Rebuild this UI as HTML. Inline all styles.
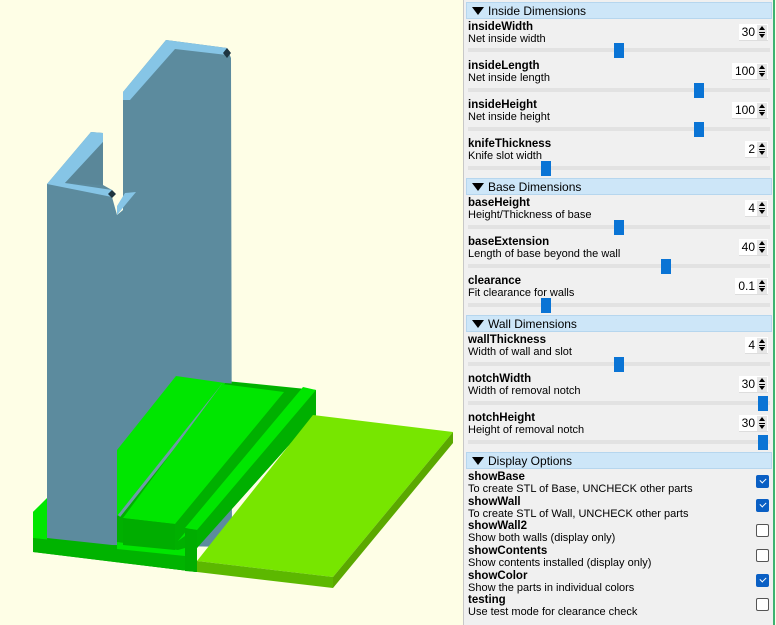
<!DOCTYPE html>
<html><head><meta charset="utf-8"><style>
*{margin:0;padding:0;box-sizing:border-box}
body{width:776px;height:625px;background:#fefee6;position:relative;overflow:hidden;font-family:"Liberation Sans",Arial,sans-serif;font-size:11px;color:#000}
#panel{position:absolute;left:463px;top:0;width:310px;height:625px;background:#f0f0f0;border-left:1px solid #c8c8c8}
#gl{position:absolute;left:773px;top:0;width:2px;height:625px;background:#3cb371}
.h{position:absolute;left:2px;width:306px;height:17px;background:#cde6f8;border:1px solid #b6d6ee;font-size:12px;line-height:16px;padding-left:21px}
.h:before{content:"";position:absolute;left:5px;top:4px;border-left:6px solid transparent;border-right:6px solid transparent;border-top:8px solid #000}
.l{position:absolute;left:4px;font-weight:bold;font-size:11.5px;margin-top:2px}
.d{position:absolute;left:4px;font-size:11px;margin-top:1px}
.tr{position:absolute;left:4px;width:302px;height:4px;background:#e2e2e2}
.th{position:absolute;width:10px;height:15px;background:#0a74d5}
.sp{position:absolute;right:5px;height:17px;background:#fff;border-bottom:1px solid #ddd;font-size:12px;line-height:17px;padding-right:13px;padding-left:3px}
.sp:after{content:"";position:absolute;right:1px;top:1px;width:10px;height:15px;background:linear-gradient(#000,#000) 2px 7px/6px 1px no-repeat,#e6e6e6}
.sp i{position:absolute;right:3px;top:2px;border-left:3px solid transparent;border-right:3px solid transparent;border-bottom:4px solid #000;z-index:2}
.sp b{position:absolute;right:3px;bottom:2px;border-left:3px solid transparent;border-right:3px solid transparent;border-top:4px solid #000;z-index:2}
.cb{position:absolute;left:292px;width:13px;height:13px;border:1px solid #555;border-radius:2px;background:#fff}
.cb.on{background:#0a5fc4;border-color:#0a5fc4}
.cb.on:after{content:"";position:absolute;left:3px;top:2px;width:5px;height:3px;border-left:1px solid #fff;border-bottom:1px solid #fff;transform:rotate(-45deg)}
</style></head><body>
<svg width="463" height="625" style="position:absolute;left:0;top:0">
<polygon points="33,512 176,376 316,390 316,415 197,548 197,572 33,552" fill="#00b300"/>
<polygon points="33,512 47,498 47,540 33,538" fill="#00e600"/>
<!-- wall -->
<polygon points="47,184 91,132 103,133 103,185 112,190 112,197 117,215 123,210 123,92 166,40 227,48 231,58 232,547 112,545 47,538" fill="#5c8b9e"/>
<polygon points="47,184 91,132 103,133 103,142 65,183 112,190 112,197" fill="#86c5e6"/>
<polygon points="123,92 166,40 227,48 227,55 175,49 130,100 123,100" fill="#86c5e6"/>
<polygon points="117,215 117,206 125,193 136,192" fill="#86c5e6"/>
<polygon points="65,183 103,142 103,185" fill="#5a8799"/>
<polygon points="112,190 108,194 112,198 116,194" fill="#1e3440"/>
<polygon points="227,48 223,53 227,58 231,53" fill="#1e3440"/>
<!-- dark cover right of ridge1 -->
<polygon points="117,516 225,383 316,390 316,415 197,548 197,572 117,562" fill="#00b000"/>
<!-- base front -->
<polygon points="33,538 197,555 197,572 33,552" fill="#00b300"/>
<polygon points="117,542 178,550 185,548 185,556 117,549" fill="#00e600"/>
<!-- ridge1 -->
<polygon points="117,450 176,376 225,383 117,516" fill="#00e600"/>
<line x1="119" y1="516" x2="223" y2="385" stroke="#6f9aa8" stroke-width="3"/>
<!-- ridge2 -->
<polygon points="123,518 222,384 284,392 175,524" fill="#00e600"/>
<polygon points="123,518 175,524 175,550 123,545" fill="#00ad00"/>
<polygon points="178,541 280,418 286,416 185,536" fill="#00e600"/>
<!-- ridge3 -->
<polygon points="185,528 303,387 316,390 197,530" fill="#00e600"/>
<polygon points="185,528 197,530 197,572 185,571" fill="#00ad00"/>
<!-- plate -->
<polygon points="197,561 313,415 453,432 333,577" fill="#77e600"/>
<polygon points="197,561 333,577 333,588 197,572" fill="#5cb800"/>
<polygon points="333,577 453,432 453,443 333,588" fill="#5aa800"/>
</svg>
<div id="panel">
<div class="h" style="top:2px">Inside Dimensions</div>
<div class="l" style="top:19px">insideWidth</div><div class="d" style="top:32px">Net inside width</div>
<div class="sp" style="top:24px">30<i></i><b></b></div>
<div class="tr" style="top:48px"></div><div class="th" style="left:150px;top:43px"></div>
<div class="l" style="top:58px">insideLength</div><div class="d" style="top:71px">Net inside length</div>
<div class="sp" style="top:63px">100<i></i><b></b></div>
<div class="tr" style="top:88px"></div><div class="th" style="left:230px;top:83px"></div>
<div class="l" style="top:97px">insideHeight</div><div class="d" style="top:110px">Net inside height</div>
<div class="sp" style="top:102px">100<i></i><b></b></div>
<div class="tr" style="top:127px"></div><div class="th" style="left:230px;top:122px"></div>
<div class="l" style="top:136px">knifeThickness</div><div class="d" style="top:149px">Knife slot width</div>
<div class="sp" style="top:141px">2<i></i><b></b></div>
<div class="tr" style="top:166px"></div><div class="th" style="left:77px;top:161px"></div>
<div class="h" style="top:178px">Base Dimensions</div>
<div class="l" style="top:195px">baseHeight</div><div class="d" style="top:208px">Height/Thickness of base</div>
<div class="sp" style="top:200px">4<i></i><b></b></div>
<div class="tr" style="top:225px"></div><div class="th" style="left:150px;top:220px"></div>
<div class="l" style="top:234px">baseExtension</div><div class="d" style="top:247px">Length of base beyond the wall</div>
<div class="sp" style="top:239px">40<i></i><b></b></div>
<div class="tr" style="top:264px"></div><div class="th" style="left:197px;top:259px"></div>
<div class="l" style="top:273px">clearance</div><div class="d" style="top:286px">Fit clearance for walls</div>
<div class="sp" style="top:278px">0.1<i></i><b></b></div>
<div class="tr" style="top:303px"></div><div class="th" style="left:77px;top:298px"></div>
<div class="h" style="top:315px">Wall Dimensions</div>
<div class="l" style="top:332px">wallThickness</div><div class="d" style="top:345px">Width of wall and slot</div>
<div class="sp" style="top:337px">4<i></i><b></b></div>
<div class="tr" style="top:362px"></div><div class="th" style="left:150px;top:357px"></div>
<div class="l" style="top:371px">notchWidth</div><div class="d" style="top:384px">Width of removal notch</div>
<div class="sp" style="top:376px">30<i></i><b></b></div>
<div class="tr" style="top:401px"></div><div class="th" style="left:294px;top:396px"></div>
<div class="l" style="top:410px">notchHeight</div><div class="d" style="top:423px">Height of removal notch</div>
<div class="sp" style="top:415px">30<i></i><b></b></div>
<div class="tr" style="top:440px"></div><div class="th" style="left:294px;top:435px"></div>
<div class="h" style="top:452px">Display Options</div>
<div class="l" style="top:469px">showBase</div><div class="d" style="top:482px">To create STL of Base, UNCHECK other parts</div><div class="cb on" style="top:475px"></div>
<div class="l" style="top:494px">showWall</div><div class="d" style="top:507px">To create STL of Wall, UNCHECK other parts</div><div class="cb on" style="top:499px"></div>
<div class="l" style="top:518px">showWall2</div><div class="d" style="top:531px">Show both walls (display only)</div><div class="cb" style="top:524px"></div>
<div class="l" style="top:543px">showContents</div><div class="d" style="top:556px">Show contents installed (display only)</div><div class="cb" style="top:549px"></div>
<div class="l" style="top:568px">showColor</div><div class="d" style="top:581px">Show the parts in individual colors</div><div class="cb on" style="top:574px"></div>
<div class="l" style="top:592px">testing</div><div class="d" style="top:605px">Use test mode for clearance check</div><div class="cb" style="top:598px"></div>
</div>
<div id="gl"></div>
</body></html>
